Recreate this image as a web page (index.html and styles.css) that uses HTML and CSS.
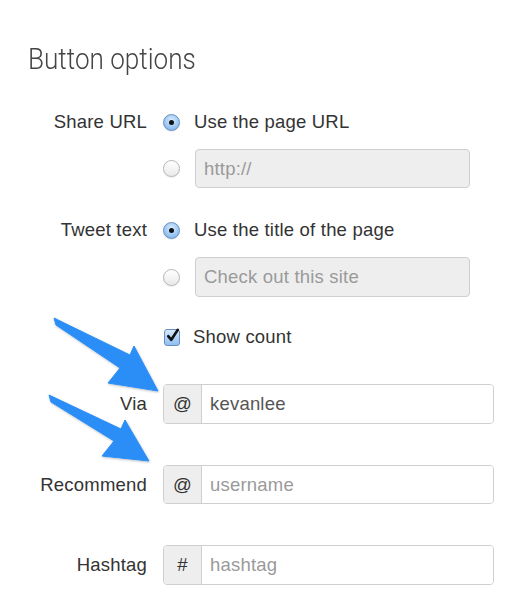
FILE: index.html
```html
<!DOCTYPE html>
<html>
<head>
<meta charset="utf-8">
<link rel="stylesheet" href="styles.css">
</head>
<body>
<div class="page">
  <h2 class="title">Button options</h2>

  <div class="row r-share">
    <div class="label">Share URL</div>
    <div class="opt"><span class="radio on"></span><span class="opt-text">Use the page URL</span></div>
  </div>
  <div class="row r-input1">
    <div class="label"></div>
    <div class="opt"><span class="radio"></span><input class="field" type="text" placeholder="http://" disabled></div>
  </div>

  <div class="row r-tweet">
    <div class="label">Tweet text</div>
    <div class="opt"><span class="radio on"></span><span class="opt-text">Use the title of the page</span></div>
  </div>
  <div class="row r-input2">
    <div class="label"></div>
    <div class="opt"><span class="radio"></span><input class="field" type="text" placeholder="Check out this site" disabled></div>
  </div>

  <div class="row r-count">
    <div class="label"></div>
    <div class="opt"><span class="check"><svg viewBox="0 0 16 16" width="16" height="16"><path d="M3.2 8.2 L6.3 11.8 L12.8 1.8" fill="none" stroke="#111" stroke-width="2.6" stroke-linecap="round" stroke-linejoin="round"/></svg></span><span class="opt-text">Show count</span></div>
  </div>

  <div class="row r-via">
    <div class="label">Via</div>
    <div class="group"><span class="addon">@</span><input class="gin" type="text" value="kevanlee"></div>
  </div>

  <div class="row r-rec">
    <div class="label">Recommend</div>
    <div class="group"><span class="addon">@</span><input class="gin" type="text" placeholder="username"></div>
  </div>

  <div class="row r-hash">
    <div class="label">Hashtag</div>
    <div class="group"><span class="addon">#</span><input class="gin" type="text" placeholder="hashtag"></div>
  </div>

  <svg class="arrows" viewBox="0 0 520 604" width="520" height="604">
    <defs>
      <filter id="sh" x="-20%" y="-20%" width="140%" height="140%">
        <feDropShadow dx="0.5" dy="1" stdDeviation="0.8" flood-color="#000" flood-opacity="0.25"/>
      </filter>
    </defs>
    <polygon filter="url(#sh)" fill="#2b8ef6" stroke="#2b8ef6" stroke-width="1" stroke-linejoin="round" points="54,318 130,355 134,346 158,391 108,383 120,368 56,325"/>
    <polygon filter="url(#sh)" fill="#2b8ef6" stroke="#2b8ef6" stroke-width="1" stroke-linejoin="round" points="49,395 121,429 125,420 149,461 102,456 114,441 51,402"/>
  </svg>
</div>
</body>
</html>
```

FILE: styles.css
```css
html, body {
  margin: 0;
  padding: 0;
  background: #fff;
}
.page {
  position: relative;
  width: 520px;
  height: 604px;
  overflow: hidden;
  padding-top: 42px;
  box-sizing: border-box;
  font-family: "Liberation Sans", Arial, sans-serif;
  font-size: 18.5px;
  letter-spacing: 0.2px;
  color: #333;
}
.title {
  margin: 0 0 0 28px;
  font-family: Roboto, "Liberation Sans", sans-serif;
  font-weight: 300;
  font-size: 29px;
  line-height: 34px;
  letter-spacing: 0;
  color: #444;
  transform: scaleX(0.9);
  transform-origin: left center;
  white-space: nowrap;
}
.row {
  display: grid;
  grid-template-columns: 147px 331px;
  column-gap: 16px;
  align-items: center;
}
.label {
  text-align: right;
  white-space: nowrap;
}
.r-share { margin-top: 34px; height: 24px; }
.r-input1 { margin-top: 15px; height: 39px; }
.r-tweet { margin-top: 30px; height: 24px; }
.r-input2 { margin-top: 15px; height: 40px; }
.r-count { margin-top: 28px; height: 24px; }
.r-via { margin-top: 35px; height: 40px; }
.r-rec { margin-top: 41px; height: 39px; }
.r-hash { margin-top: 41px; height: 40px; }

.opt {
  display: flex;
  align-items: center;
  height: 100%;
}
.opt-text {
  margin-left: 14px;
  color: #333;
}
.radio {
  flex: none;
  width: 17px;
  height: 17px;
  box-sizing: border-box;
  border-radius: 50%;
  border: 1px solid #b5b5b5;
  background: linear-gradient(#ffffff, #e9e9e9);
  box-shadow: 0 1px 1px rgba(0,0,0,0.08);
  position: relative;
}
.radio.on {
  border-color: #6a8fbf;
  background: radial-gradient(circle at 50% 35%, #d9ecff 0%, #a9cff6 45%, #6ea9e6 100%);
}
.radio.on::after {
  content: "";
  position: absolute;
  left: 5px;
  top: 5px;
  width: 5px;
  height: 5px;
  border-radius: 50%;
  background: #111;
}
.field {
  margin: 0 0 0 15px;
  width: 275px;
  height: 39px;
  box-sizing: border-box;
  border: 1px solid #cfcfcf;
  border-radius: 4px;
  background: #eeeeee;
  padding: 0 8px;
  font-family: "Liberation Sans", Arial, sans-serif;
  font-size: 18.5px;
  letter-spacing: 0.2px;
  color: #555;
  outline: none;
}
.r-input2 .field { height: 40px; }
.field::placeholder { color: #9a9a9a; opacity: 1; }

.check {
  flex: none;
  width: 16px;
  height: 17px;
  box-sizing: border-box;
  margin-left: 1px;
  border: 1px solid #6a8fbf;
  border-radius: 3px;
  background: linear-gradient(#d5e9fd, #8fbff0);
  position: relative;
}
.check svg {
  position: absolute;
  left: 0;
  top: -2px;
}
.r-count .opt-text { margin-left: 13px; }

.group {
  display: flex;
  width: 331px;
  height: 100%;
  box-sizing: border-box;
  border: 1px solid #cfcfcf;
  border-radius: 4px;
  overflow: hidden;
}
.addon {
  flex: none;
  width: 37px;
  background: #eeeeee;
  border-right: 1px solid #cfcfcf;
  display: flex;
  align-items: center;
  justify-content: center;
  color: #333;
  font-size: 18.5px;
}
.gin {
  flex: 1;
  border: 0;
  margin: 0;
  padding: 0 8px;
  font-family: "Liberation Sans", Arial, sans-serif;
  font-size: 18.5px;
  letter-spacing: 0.2px;
  color: #555;
  background: #fff;
  outline: none;
  min-width: 0;
}
.gin::placeholder { color: #9a9a9a; opacity: 1; }

.arrows {
  position: absolute;
  left: 0;
  top: 0;
  pointer-events: none;
}
```
